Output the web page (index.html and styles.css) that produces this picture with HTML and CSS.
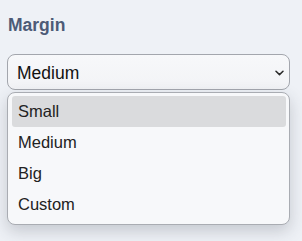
FILE: index.html
```html
<!DOCTYPE html>
<html>
<head>
<meta charset="utf-8">
<link rel="stylesheet" href="styles.css">
</head>
<body>
<div class="panel">
  <div class="label">Margin</div>
  <div class="select">
    <span class="value">Medium</span>
    <svg class="chev" width="9" height="6" viewBox="0 0 9 6"><path d="M1 1.2 L4.5 4.6 L8 1.2" fill="none" stroke="#2a2a2a" stroke-width="1.5" stroke-linecap="round" stroke-linejoin="round"/></svg>
  </div>
  <div class="menu">
    <div class="item active">Small</div>
    <div class="item">Medium</div>
    <div class="item">Big</div>
    <div class="item">Custom</div>
  </div>
</div>
</body>
</html>
```
FILE: styles.css
```css
html, body {
  margin: 0;
  padding: 0;
  background: #eef1f6;
  font-family: "Liberation Sans", Arial, sans-serif;
}
.panel {
  width: 302px;
  height: 241px;
  box-sizing: border-box;
  padding: 15px 12px 0 7px;
  display: flex;
  flex-direction: column;
}
.label {
  font-size: 17.5px;
  font-weight: bold;
  line-height: 20px;
  color: #4d5b77;
  padding-left: 1px;
  margin-bottom: 19px;
}
.select {
  height: 36px;
  box-sizing: border-box;
  border: 1px solid #a3a6ad;
  border-radius: 8px;
  background: linear-gradient(#f7f8fa, #f2f3f6);
  display: flex;
  align-items: center;
  justify-content: space-between;
  padding: 1px 5px 0 9px;
}
.value {
  font-size: 17.5px;
  line-height: 20px;
  color: #111;
}
.chev {
  display: block;
  margin-top: 1px;
}
.menu {
  margin-top: 2px;
  border: 1px solid #a9acb2;
  border-radius: 8px;
  background: #f7f8fa;
  padding: 3px 3px 4px 4px;
  box-shadow: 0 6px 16px rgba(50, 55, 70, 0.22);
}
.item {
  height: 31px;
  line-height: 31px;
  font-size: 16.5px;
  color: #222;
  padding-left: 6px;
  border-radius: 3px;
}
.item.active {
  background: #dadbdd;
}
```
